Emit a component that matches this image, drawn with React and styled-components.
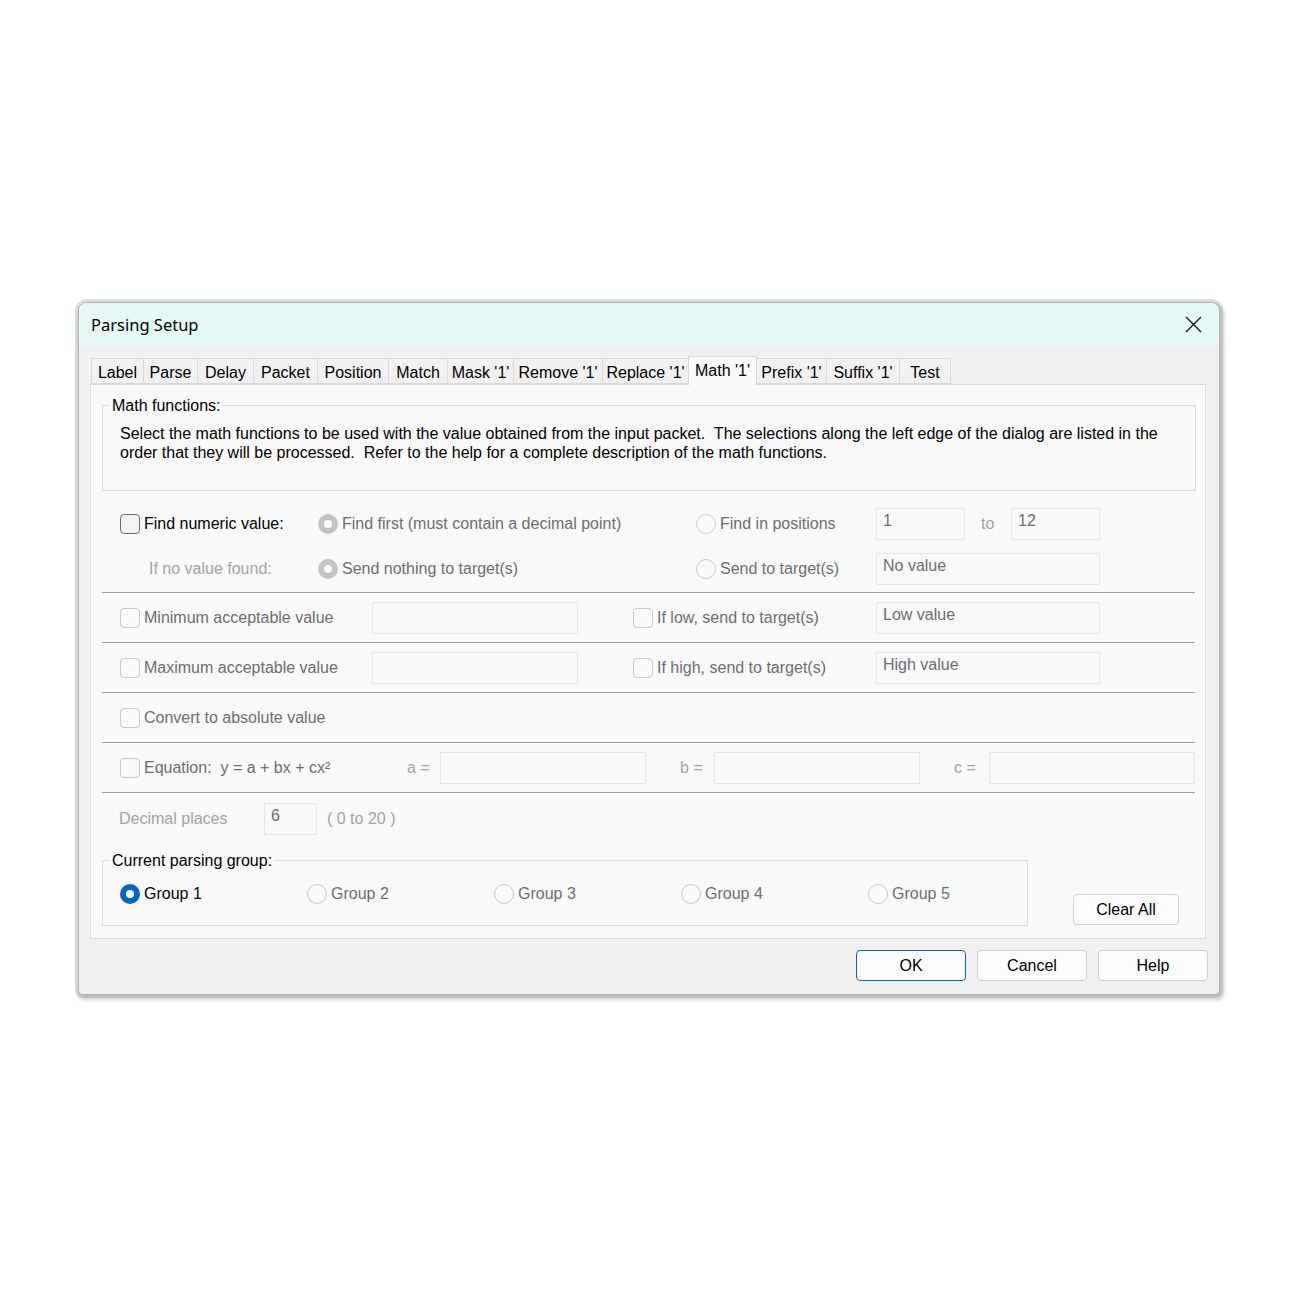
import React from "react";
import styled, { createGlobalStyle } from "styled-components";

const GlobalStyle = createGlobalStyle`
  body {
    margin: 0;
    background: #ffffff;
    font-family: "Liberation Sans", Arial, sans-serif;
  }
`;

const Page = styled.div`
  width: 1300px;
  height: 1300px;
  padding: 303px 0 0 79px;
  box-sizing: border-box;
`;

const Window = styled.div`
  width: 1140px;
  background: #f0f0f0;
  border-radius: 8px 8px 4px 4px;
  box-shadow: 0 0 0 1px #b4b4b4, 0 0 0 4px rgba(160, 160, 160, 0.35),
    2px 3px 4px 3px rgba(0, 0, 0, 0.2);
  overflow: hidden;
`;

const TitleBar = styled.div`
  height: 43px;
  background: #e6f8f4;
  display: flex;
  align-items: center;
  justify-content: space-between;
  padding: 0 17px 0 12px;
`;

const Title = styled.span`
  font-family: "Noto Sans", "Open Sans", sans-serif;
  font-size: 16.5px;
  color: #000;
`;

const CloseIcon = () => (
  <svg width="17" height="17" viewBox="0 0 17 17">
    <path d="M1 1 L16 16 M16 1 L1 16" stroke="#1a1a1a" strokeWidth="1.4" fill="none" />
  </svg>
);

const Body = styled.div`
  padding: 10px 11px 13px 11px;
`;

const TabRow = styled.div`
  display: flex;
  align-items: flex-end;
  height: 28px;
  padding-left: 1px;
  position: relative;
  z-index: 1;
`;

const Tab = styled.div`
  width: ${(p) => p.w}px;
  height: ${(p) => (p.active ? 29 : 26)}px;
  margin-bottom: ${(p) => (p.active ? -1 : 0)}px;
  box-sizing: border-box;
  border: 1px solid #d9d9d9;
  border-bottom: ${(p) => (p.active ? "none" : "1px solid #d9d9d9")};
  margin-right: -1px;
  background: ${(p) => (p.active ? "#f9f9f9" : "#f0f0f0")};
  font-size: 16px;
  line-height: 19px;
  color: #000;
  display: flex;
  align-items: flex-start;
  padding-top: ${(p) => (p.active ? 4 : 4)}px;
  justify-content: center;
  white-space: nowrap;
`;

const Panel = styled.div`
  margin-right: 2px;
  border: 1px solid #dcdcdc;
  background: #f9f9f9;
  padding: 11px 9px 12px 11px;
`;

const GroupBox = styled.fieldset`
  margin: 0;
  border: 1px solid #dcdcdc;
  padding: 0 0 0 7px;
  width: ${(p) => (p.w ? `${p.w}px` : "auto")};
  min-width: 0;
  height: ${(p) => p.h}px;
  box-sizing: border-box;
  flex: none;
`;

const Legend = styled.legend`
  padding: 0 2px;
  font-size: 16px;
  line-height: 19px;
  color: #000;
`;

const Description = styled.div`
  margin: 9px 0 0 10px;
  font-size: 16px;
  line-height: 19px;
  color: #000;
  white-space: pre;
`;

const Section = styled.div`
  border-bottom: 1px solid #a0a0a0;
  margin-right: 1px;
  padding: ${(p) => p.pad || "0"};
`;

const Row = styled.div`
  display: grid;
  grid-template-columns: ${(p) => p.cols};
  align-items: center;
  height: ${(p) => p.h || 49}px;
  padding-left: ${(p) => p.indent || 18}px;
`;

const Item = styled.label`
  display: flex;
  align-items: center;
  gap: 4px;
  font-size: 16px;
  white-space: pre;
  color: ${(p) =>
    p.tone === "dark" ? "#000" : p.tone === "light" ? "#a3a3a3" : "#6d6d6d"};
  padding-left: ${(p) => p.pl || 0}px;
`;

const Check = styled.span`
  width: 20px;
  height: 20px;
  box-sizing: border-box;
  border-radius: 4px;
  border: 1px solid ${(p) => (p.strong ? "#6e6e6e" : "#c8c8c8")};
  background: ${(p) => (p.strong ? "#f3f3f3" : "#f9f9f9")};
  flex: none;
`;

const Radio = styled.span`
  width: 20px;
  height: 20px;
  box-sizing: border-box;
  border-radius: 50%;
  flex: none;
  position: relative;
  border: ${(p) => (p.on ? "none" : "1px solid #c8c8c8")};
  background: ${(p) =>
    p.on === "blue" ? "#0067c0" : p.on === "gray" ? "#c4c4c4" : "#f9f9f9"};
  &::after {
    content: "";
    display: ${(p) => (p.on ? "block" : "none")};
    position: absolute;
    left: 6px;
    top: 6px;
    width: 8px;
    height: 8px;
    border-radius: 50%;
    background: #ffffff;
  }
`;

const Field = styled.div`
  height: 32px;
  box-sizing: border-box;
  border: 1px solid #e6e6e6;
  background: #f9f9f9;
  font-size: 16px;
  color: #6d6d6d;
  padding: 3px 0 0 6px;
  align-self: center;
`;

const Hint = styled.span`
  font-size: 16px;
  color: #a3a3a3;
  padding-left: ${(p) => p.pl || 0}px;
  white-space: nowrap;
`;

const BottomArea = styled.div`
  display: flex;
  align-items: flex-end;
  margin-top: 6px;
`;

const GroupRow = styled.div`
  display: grid;
  grid-template-columns: repeat(4, 187px) auto;
  align-items: center;
  height: 24px;
  margin: 12px 0 0 10px;
`;

const Button = styled.button`
  width: ${(p) => p.w || 110}px;
  height: 31px;
  box-sizing: border-box;
  border: 1px solid ${(p) => (p.primary ? "#0067c0" : "#d0d0d0")};
  border-radius: 4px;
  background: #fdfdfd;
  font-family: "Liberation Sans", Arial, sans-serif;
  font-size: 16px;
  color: #000;
  padding: 0;
  flex: none;
`;

const ClearButton = styled(Button)`
  margin: 0 0 1px 45px;
`;

const ButtonRow = styled.div`
  display: flex;
  justify-content: flex-end;
  gap: 11px;
  margin-top: 11px;
`;

const tabs = [
  ["Label", 53],
  ["Parse", 55],
  ["Delay", 57],
  ["Packet", 65],
  ["Position", 72],
  ["Match", 60],
  ["Mask '1'", 67],
  ["Remove '1'", 90],
  ["Replace '1'", 87],
  ["Math '1'", 69],
  ["Prefix '1'", 71],
  ["Suffix '1'", 74],
  ["Test", 52],
];

const groups = ["Group 1", "Group 2", "Group 3", "Group 4", "Group 5"];

export default function App() {
  return (
    <>
      <GlobalStyle />
      <Page>
        <Window>
          <TitleBar>
            <Title>Parsing Setup</Title>
            <CloseIcon />
          </TitleBar>
          <Body>
            <TabRow>
              {tabs.map(([name, w]) => (
                <Tab key={name} w={w} active={name === "Math '1'"}>
                  {name}
                </Tab>
              ))}
            </TabRow>
            <Panel>
              <GroupBox h={95}>
                <Legend>Math functions:</Legend>
                <Description>
                  {"Select the math functions to be used with the value obtained from the input packet.  The selections along the left edge of the dialog are listed in the"}
                  <br />
                  {"order that they will be processed.  Refer to the help for a complete description of the math functions."}
                </Description>
              </GroupBox>

              <Section pad="10px 0 1px 0">
                <Row h={45} cols="198px 378px 180px 89px 46px 89px">
                  <Item tone="dark">
                    <Check strong />
                    Find numeric value:
                  </Item>
                  <Item>
                    <Radio on="gray" />
                    Find first (must contain a decimal point)
                  </Item>
                  <Item>
                    <Radio />
                    Find in positions
                  </Item>
                  <Field>1</Field>
                  <Hint pl={16}>to</Hint>
                  <Field>12</Field>
                </Row>
                <Row h={45} cols="198px 378px 180px 224px">
                  <Item tone="light" pl={29}>
                    If no value found:
                  </Item>
                  <Item>
                    <Radio on="gray" />
                    Send nothing to target(s)
                  </Item>
                  <Item>
                    <Radio />
                    Send to target(s)
                  </Item>
                  <Field>No value</Field>
                </Row>
              </Section>

              <Section>
                <Row cols="252px 206px 55px 243px 224px">
                  <Item>
                    <Check />
                    Minimum acceptable value
                  </Item>
                  <Field />
                  <span />
                  <Item>
                    <Check />
                    If low, send to target(s)
                  </Item>
                  <Field>Low value</Field>
                </Row>
              </Section>

              <Section>
                <Row cols="252px 206px 55px 243px 224px">
                  <Item>
                    <Check />
                    Maximum acceptable value
                  </Item>
                  <Field />
                  <span />
                  <Item>
                    <Check />
                    If high, send to target(s)
                  </Item>
                  <Field>High value</Field>
                </Row>
              </Section>

              <Section>
                <Row cols="1fr">
                  <Item>
                    <Check />
                    Convert to absolute value
                  </Item>
                </Row>
              </Section>

              <Section>
                <Row cols="287px 33px 206px 34px 34px 206px 34px 35px 206px">
                  <Item>
                    <Check />
                    {"Equation:  y = a + bx + cx²"}
                  </Item>
                  <Hint>a =</Hint>
                  <Field />
                  <span />
                  <Hint>b =</Hint>
                  <Field />
                  <span />
                  <Hint>c =</Hint>
                  <Field />
                </Row>
              </Section>

              <Row h={52} indent={17} cols="145px 53px auto">
                <Hint>Decimal places</Hint>
                <Field>6</Field>
                <Hint pl={10}>( 0 to 20 )</Hint>
              </Row>

              <BottomArea>
                <GroupBox w={926} h={75}>
                  <Legend>Current parsing group:</Legend>
                  <GroupRow>
                    {groups.map((g, i) => (
                      <Item key={g} tone={i === 0 ? "dark" : undefined}>
                        <Radio on={i === 0 ? "blue" : undefined} />
                        {g}
                      </Item>
                    ))}
                  </GroupRow>
                </GroupBox>
                <ClearButton w={106}>Clear All</ClearButton>
              </BottomArea>
            </Panel>
            <ButtonRow>
              <Button primary>OK</Button>
              <Button>Cancel</Button>
              <Button>Help</Button>
            </ButtonRow>
          </Body>
        </Window>
      </Page>
    </>
  );
}
